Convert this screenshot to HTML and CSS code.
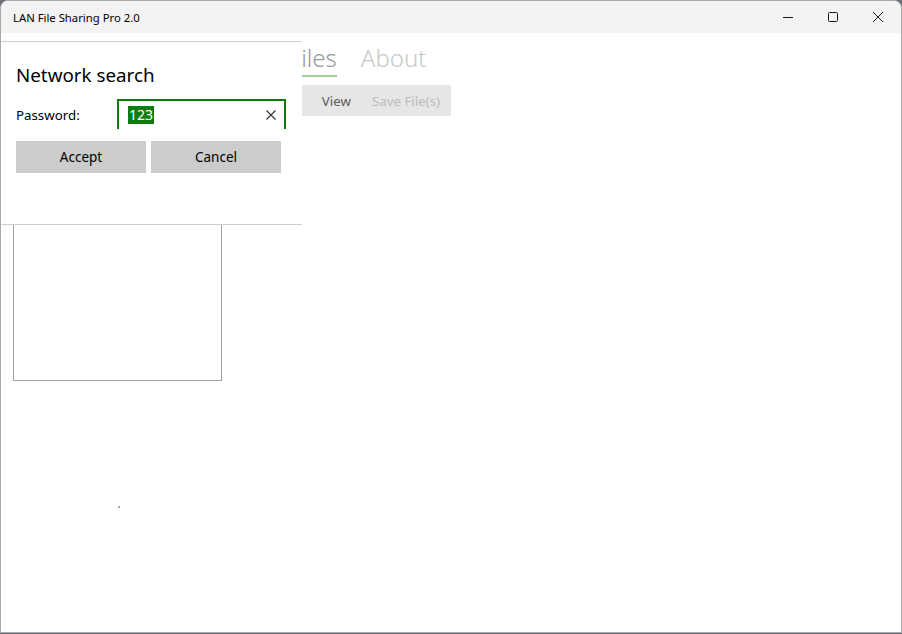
FILE: index.html
```html
<!DOCTYPE html>
<html>
<head>
<meta charset="utf-8">
<link rel="stylesheet" href="styles.css">
</head>
<body>
<div class="window">
  <div class="titlebar">
    <div class="title">LAN File Sharing Pro 2.0</div>
    <div class="controls">
      <div class="ctl min"><svg width="10" height="10" viewBox="0 0 10 10"><path d="M0 5.5H10" stroke="#1a1a1a" stroke-width="1"/></svg></div>
      <div class="ctl max"><svg width="10" height="10" viewBox="0 0 10 10"><rect x="0.5" y="0.5" width="9" height="9" rx="1" fill="none" stroke="#1a1a1a" stroke-width="1"/></svg></div>
      <div class="ctl close"><svg width="10" height="10" viewBox="0 0 10 10"><path d="M0 0L10 10M10 0L0 10" stroke="#1a1a1a" stroke-width="1"/></svg></div>
    </div>
  </div>
  <div class="content">
    <div class="tabs">
      <div class="tab active">Files</div>
      <div class="tab">About</div>
    </div>
    <div class="toolbar">
      <span class="tbtn on">View</span>
      <span class="tbtn off">Save File(s)</span>
    </div>
    <div class="listbox"></div>
    <div class="dot"></div>
  </div>

  <div class="dialog">
    <div class="dlg-title">Network search</div>
    <div class="dlg-row">
      <label class="dlg-label">Password:</label>
      <div class="input">
        <span class="sel">123</span>
        <svg class="clear" width="10" height="10" viewBox="0 0 10 10"><path d="M0.5 0.5L9.5 9.5M9.5 0.5L0.5 9.5" stroke="#333" stroke-width="1.1"/></svg>
      </div>
    </div>
    <div class="dlg-buttons">
      <div class="btn">Accept</div>
      <div class="btn">Cancel</div>
    </div>
  </div>
</div>
</body>
</html>
```
FILE: styles.css
```css
html, body {
  margin: 0;
  padding: 0;
  background: #6b6f78;
}
body {
  width: 902px;
  height: 634px;
  overflow: hidden;
  font-family: "Segoe UI", "Noto Sans", "Open Sans", sans-serif;
}
.window {
  position: relative;
  box-sizing: border-box;
  width: 902px;
  height: 633px;
  border: 1px solid #a9a9a9;
  border-radius: 8px 8px 0 0;
  background: #ffffff;
  overflow: hidden;
}
.titlebar {
  height: 32px;
  background: #f3f3f3;
  display: flex;
  align-items: center;
  justify-content: space-between;
}
.title {
  font-size: 11.3px;
  color: #000;
  padding-left: 12px;
  padding-top: 1px;
}
.controls {
  display: flex;
  height: 32px;
}
.ctl {
  height: 32px;
  display: flex;
  align-items: center;
  justify-content: center;
}
.ctl.min { width: 44px; }
.ctl.max { width: 45px; }
.ctl.close { width: 46px; }
.content {
  padding: 8px 0 0 12px;
}
.tabs {
  display: flex;
  gap: 24px;
  height: 37px;
  padding-left: 276px;
}
.tab {
  font-size: 24px;
  font-weight: 300;
  color: #c8c8c8;
  line-height: 34px;
  height: 36px;
  box-sizing: border-box;
}
.tab.active {
  color: #9a9a9a;
  border-bottom: 2px solid #9ccd9c;
}
.toolbar {
  margin-top: 7px;
  display: flex;
  width: 438px;
  height: 31px;
  background: #e6e6e6;
  align-items: center;
  justify-content: flex-end;
  padding-right: 11px;
  box-sizing: border-box;
  gap: 21px;
}
.tbtn {
  font-size: 13.3px;
  color: #666;
}
.tbtn.on { color: #5c5c5c; }
.tbtn.off { color: #bdbdbd; }
.listbox {
  margin-top: 14px;
  width: 209px;
  height: 251px;
  border: 1px solid #a0a0a0;
  box-sizing: border-box;
}
.dot {
  margin: 125px 0 0 105px;
  width: 2px;
  height: 2px;
  background: #a8a8a8;
}
.dialog {
  position: absolute;
  left: -1px;
  top: 40px;
  width: 302px;
  height: 184px;
  box-sizing: border-box;
  background: #fff;
  border-top: 1px solid #cfcfcf;
  border-bottom: 1px solid #cfcfcf;
  padding: 19px 0 0 16px;
}
.dlg-title {
  font-size: 18.8px;
  line-height: 28px;
  color: #000;
}
.dlg-row {
  display: flex;
  align-items: flex-start;
  margin-top: 10px;
}
.dlg-label {
  width: 101px;
  font-size: 13.3px;
  color: #000;
  line-height: 30px;
  padding-top: 1px;
}
.input {
  box-sizing: border-box;
  width: 169px;
  height: 30px;
  border: 2px solid #107c10;
  border-bottom: none;
  display: flex;
  align-items: center;
  justify-content: space-between;
  padding: 0 8px 0 9px;
}
.sel {
  background: #107c10;
  color: #fff;
  font-size: 14px;
  line-height: 18px;
  padding: 0 1px;
  margin-top: -1px;
}
.clear { display: block; }
.dlg-buttons {
  display: flex;
  gap: 5px;
  margin-top: 11px;
}
.btn {
  width: 130px;
  height: 32px;
  background: #cccccc;
  font-size: 13.5px;
  color: #000;
  display: flex;
  align-items: center;
  justify-content: center;
  padding-bottom: 1px;
  box-sizing: border-box;
}
```
